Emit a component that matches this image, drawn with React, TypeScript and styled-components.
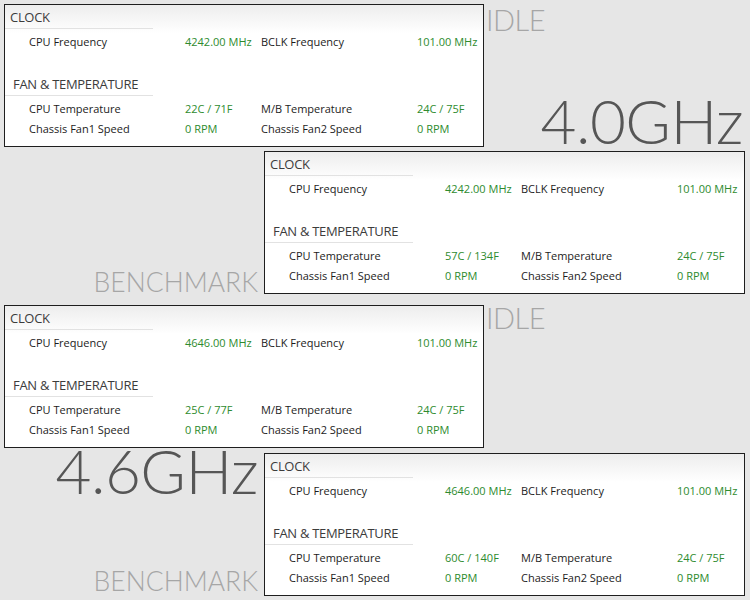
import { Fragment } from "react";
import styled, { createGlobalStyle } from "styled-components";

type Stat = { label: string; value: string };

type Reading = {
  clock: Stat[];
  fan: Stat[];
};

const GlobalStyle = createGlobalStyle`
  html, body {
    margin: 0;
    padding: 0;
    background: #e6e6e6;
  }
  body {
    width: 750px;
    height: 600px;
    overflow: hidden;
    font-family: "Open Sans", "Noto Sans", sans-serif;
  }
`;

const Page = styled.main`
  display: flex;
  flex-direction: column;
  padding-top: 4px;
`;

const Row = styled.section<{ $panel: "left" | "right"; $gap: number }>`
  display: grid;
  grid-template-columns: ${(p) => (p.$panel === "left" ? "480px 1fr" : "1fr 481px")};
  height: 143px;
  margin-top: ${(p) => p.$gap}px;
  padding: ${(p) => (p.$panel === "left" ? "0 0 0 4px" : "0 5px 0 0")};
`;

const Side = styled.div<{ $align: "start" | "end" }>`
  display: flex;
  flex-direction: column;
  justify-content: space-between;
  align-items: ${(p) => (p.$align === "start" ? "flex-start" : "flex-end")};
  padding: ${(p) => (p.$align === "start" ? "0 7px 0 2px" : "0 6px 0 0")};
  min-width: 0;
`;

const Caption = styled.span<{
  $size: number;
  $color: string;
  $lh?: number;
  $mt?: number;
  $mb?: number;
  $right?: boolean;
}>`
  display: block;
  font-family: "Lato", "Open Sans", sans-serif;
  font-weight: 300;
  font-size: ${(p) => p.$size}px;
  line-height: ${(p) => p.$lh ?? 1};
  color: ${(p) => p.$color};
  white-space: nowrap;
  letter-spacing: -0.5px;
  margin-top: ${(p) => p.$mt ?? 0}px;
  margin-bottom: ${(p) => p.$mb ?? 0}px;
  align-self: ${(p) => (p.$right ? "flex-end" : "auto")};
`;

const Wide = styled(Caption)`
  letter-spacing: 0;
`;

const Panel = styled.div`
  box-sizing: border-box;
  height: 143px;
  border: 1px solid #1e1e1e;
  background: linear-gradient(to bottom, #ededed 0px, #ffffff 28px, #ffffff);
  display: flex;
  flex-direction: column;
`;

const SectionHead = styled.div<{ $indent: number; $space?: number }>`
  width: 148px;
  height: 24px;
  line-height: 24px;
  font-size: 13px;
  letter-spacing: -0.3px;
  white-space: nowrap;
  color: #3c3c3c;
  padding-left: ${(p) => p.$indent}px;
  box-sizing: border-box;
  border-bottom: 1px solid #e2e2e2;
  margin-top: ${(p) => p.$space ?? 0}px;
`;

const Stats = styled.div`
  display: grid;
  grid-template-columns: 156px 76px 156px 76px;
  grid-auto-rows: 20px;
  padding: 3px 0 0 24px;
  font-size: 11px;
  line-height: 20px;
`;

const Label = styled.span`
  color: #1c1c1c;
  white-space: nowrap;
`;

const Value = styled.span`
  color: #2e8b2e;
  white-space: nowrap;
`;

function StatGrid({ stats }: { stats: Stat[] }) {
  return (
    <Stats>
      {stats.map((s) => (
        <Fragment key={s.label}>
          <Label>{s.label}</Label>
          <Value>{s.value}</Value>
        </Fragment>
      ))}
    </Stats>
  );
}

function MonitorPanel({ data }: { data: Reading }) {
  return (
    <Panel>
      <SectionHead $indent={5}>CLOCK</SectionHead>
      <StatGrid stats={data.clock} />
      <SectionHead $indent={8} $space={20}>
        FAN &amp; TEMPERATURE
      </SectionHead>
      <StatGrid stats={data.fan} />
    </Panel>
  );
}

const reading = (freq: string, cpuTemp: string): Reading => ({
  clock: [
    { label: "CPU Frequency", value: freq },
    { label: "BCLK Frequency", value: "101.00 MHz" },
  ],
  fan: [
    { label: "CPU Temperature", value: cpuTemp },
    { label: "M/B Temperature", value: "24C / 75F" },
    { label: "Chassis Fan1 Speed", value: "0 RPM" },
    { label: "Chassis Fan2 Speed", value: "0 RPM" },
  ],
});

const LIGHT = "#a6a6a6";
const DARK = "#565656";

const App = () => {
  return (
    <>
      <GlobalStyle />
      <Page>
        {/* 4.0GHz idle / benchmark */}
        <Row $panel="left" $gap={0}>
          <MonitorPanel data={reading("4242.00 MHz", "22C / 71F")} />
          <Side $align="start">
            <Caption $size={29} $color={LIGHT} $mt={1}>
              IDLE
            </Caption>
            <Caption $size={62} $color={DARK} $mb={-4} $right>
              4.0GHz
            </Caption>
          </Side>
        </Row>
        <Row $panel="right" $gap={4}>
          <Side $align="end">
            <span />
            <Wide $size={26.5} $color={LIGHT} $mb={-1}>
              BENCHMARK
            </Wide>
          </Side>
          <MonitorPanel data={reading("4242.00 MHz", "57C / 134F")} />
        </Row>

        {/* 4.6GHz idle / benchmark */}
        <Row $panel="left" $gap={11}>
          <MonitorPanel data={reading("4646.00 MHz", "25C / 77F")} />
          <Side $align="start">
            <Caption $size={29} $color={LIGHT} $mt={-2}>
              IDLE
            </Caption>
          </Side>
        </Row>
        <Row $panel="right" $gap={5}>
          <Side $align="end">
            <Caption $size={62} $color={DARK} $lh={0.75} $mt={-6}>
              4.6GHz
            </Caption>
            <Wide $size={26.5} $color={LIGHT} $mb={2}>
              BENCHMARK
            </Wide>
          </Side>
          <MonitorPanel data={reading("4646.00 MHz", "60C / 140F")} />
        </Row>
      </Page>
    </>
  );
};

export default App;
